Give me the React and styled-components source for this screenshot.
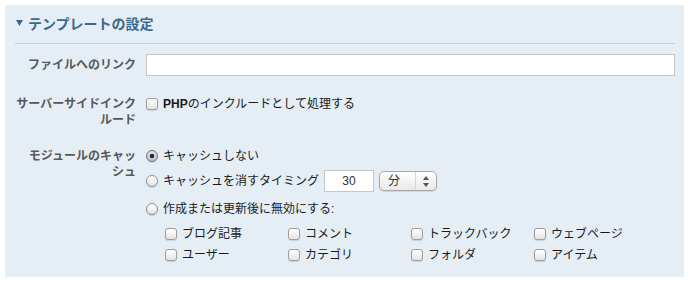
import React from 'react';
import styled, { createGlobalStyle } from 'styled-components';

const GlobalStyle = createGlobalStyle`
  body {
    margin: 0;
    background: #ffffff;
    font-family: "Liberation Sans", "Noto Sans CJK JP", sans-serif;
    font-size: 12px;
    color: #1a1a1a;
  }
`;

const Panel = styled.section`
  margin: 5px;
  width: 679px;
  box-sizing: border-box;
  padding: 8px 9px 12px 10px;
  background: #e5edf5;
`;

const Header = styled.h2`
  margin: 0;
  display: flex;
  align-items: center;
  gap: 5px;
  height: 20px;
  padding: 0 0 10px 1px;
  border-bottom: 1px solid #c9ced4;
  font-size: 14px;
  font-weight: bold;
  color: #3a6b8f;
`;

const FieldList = styled.div`
  display: flex;
  flex-direction: column;
  gap: 20px;
  margin-top: 10px;
`;

const Field = styled.div`
  display: flex;
  align-items: ${p => (p.$center ? 'center' : 'flex-start')};
  gap: 10px;
`;

const Label = styled.label`
  flex: 0 0 121px;
  text-align: right;
  font-weight: bold;
  color: #585858;
  line-height: 16px;
`;

const TextInput = styled.input`
  box-sizing: border-box;
  flex: ${p => (p.$small ? '0 0 50px' : '1')};
  width: ${p => (p.$small ? '50px' : 'auto')};
  min-width: 0;
  height: 22px;
  margin: 0;
  padding: 0 4px;
  border: 1px solid #c6c6c6;
  background: #ffffff;
  font: 12px "Liberation Sans", sans-serif;
  color: #333;
  text-align: ${p => (p.$small ? 'center' : 'left')};
  outline: none;
`;

const Options = styled.div`
  display: flex;
  flex-direction: column;
`;

const Option = styled.label`
  display: flex;
  align-items: center;
  gap: 5px;
  height: ${p => p.$h || 16}px;
  margin-top: ${p => p.$top || 0}px;
  line-height: 16px;
  white-space: nowrap;
`;

const Check = styled.input.attrs({ type: 'checkbox' })`
  appearance: none;
  flex: 0 0 12px;
  width: 12px;
  height: 12px;
  margin: 0;
  box-sizing: border-box;
  border: 1px solid #9c9c9c;
  border-radius: 3px;
  background: linear-gradient(#ffffff, #e4e4e4);
  box-shadow: 0 1px 1px rgba(0, 0, 0, 0.12);
`;

const Radio = styled.input.attrs({ type: 'radio' })`
  appearance: none;
  flex: 0 0 12px;
  width: 12px;
  height: 12px;
  margin: 0;
  box-sizing: border-box;
  border: 1px solid #8f8f8f;
  border-radius: 50%;
  background: linear-gradient(#ffffff, #e2e2e2);
  box-shadow: 0 1px 1px rgba(0, 0, 0, 0.12);

  &:checked {
    background: radial-gradient(circle, #2b2b2b 0 2px, transparent 2.6px),
      linear-gradient(#dfe6ee, #b9c3cd);
    border-color: #6f6f6f;
  }
`;

const Strong = styled.b`
  font-family: "Liberation Sans", sans-serif;
`;

const Select = styled.div`
  display: flex;
  align-items: center;
  box-sizing: border-box;
  flex: 0 0 58px;
  height: 20px;
  border: 1px solid #a8a8a8;
  border-radius: 5px;
  background: linear-gradient(#ffffff, #e9e9e9);
  box-shadow: 0 1px 1px rgba(0, 0, 0, 0.1);
  color: #333;
`;

const SelectValue = styled.span`
  flex: 1;
  padding-left: 8px;
  line-height: 18px;
`;

const SelectArrows = styled.span`
  display: flex;
  align-items: center;
  justify-content: center;
  width: 20px;
  height: 100%;
  border-left: 1px solid #d6d6d6;
`;

const CheckGrid = styled.div`
  display: grid;
  grid-template-columns: repeat(4, 123px);
  grid-auto-rows: 21px;
  margin-top: 6px;
  padding-left: 19px;
`;

const Arrow = () => (
  <svg width="7" height="6" viewBox="0 0 7 6">
    <polygon points="0,0 7,0 3.5,6" fill="#3a6b8f" />
  </svg>
);

const Updown = () => (
  <svg width="6" height="11" viewBox="0 0 6 11">
    <polygon points="3,0 6,4 0,4" fill="#555" />
    <polygon points="0,7 6,7 3,11" fill="#555" />
  </svg>
);

const targets = ['ブログ記事', 'コメント', 'トラックバック', 'ウェブページ', 'ユーザー', 'カテゴリ', 'フォルダ', 'アイテム'];

export default function App() {
  return (
    <>
      <GlobalStyle />
      <Panel>
        <Header>
          <Arrow />
          テンプレートの設定
        </Header>
        <FieldList>
          <Field $center>
            <Label>ファイルへのリンク</Label>
            <TextInput type="text" />
          </Field>
          <Field>
            <Label>サーバーサイドインク<br />ルード</Label>
            <Option>
              <Check />
              <span><Strong>PHP</Strong>のインクルードとして処理する</span>
            </Option>
          </Field>
          <Field>
            <Label>モジュールのキャッ<br />シュ</Label>
            <Options>
              <Option>
                <Radio name="cache" defaultChecked />
                キャッシュしない
              </Option>
              <Option $h={22} $top={6}>
                <Radio name="cache" />
                キャッシュを消すタイミング
                <TextInput $small type="text" defaultValue="30" />
                <Select>
                  <SelectValue>分</SelectValue>
                  <SelectArrows><Updown /></SelectArrows>
                </Select>
              </Option>
              <Option $top={9}>
                <Radio name="cache" />
                作成または更新後に無効にする:
              </Option>
              <CheckGrid>
                {targets.map(t => (
                  <Option key={t} $h={21}>
                    <Check />
                    {t}
                  </Option>
                ))}
              </CheckGrid>
            </Options>
          </Field>
        </FieldList>
      </Panel>
    </>
  );
}
